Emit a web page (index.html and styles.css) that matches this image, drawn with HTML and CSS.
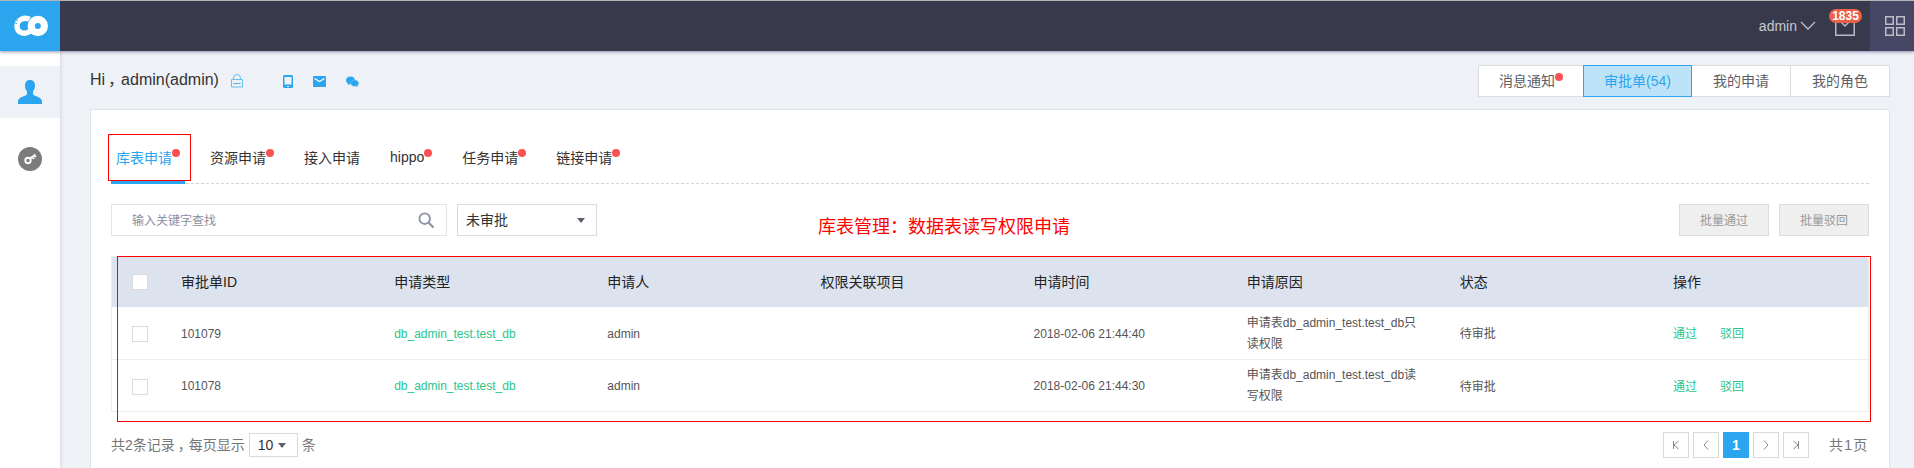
FILE: index.html
```html
<!DOCTYPE html>
<html lang="zh-CN">
<head>
<meta charset="utf-8">
<title>审批单</title>
<link rel="stylesheet" href="styles.css">
</head>
<body>
<header class="topbar">
  <div class="logo">
    <svg width="36" height="22" viewBox="0 0 36 22"><path d="M16.500 4.300C12 1.500 4 4.500 4 11c0 7 8 9.500 13 5" fill="none" stroke="#fff" stroke-width="5.400"/><circle cx="24.800" cy="11" r="6.600" fill="none" stroke="#fff" stroke-width="7.200"/><path d="M0 7l4 1.500M1.500 3.500l3.500 2.500" stroke="#2ba5ee" stroke-width="1"/></svg>
  </div>
  <div class="user">admin<svg width="16" height="10" viewBox="0 0 16 10"><path d="M1 1l7 7 7-7" fill="none" stroke="#c0c1c9" stroke-width="1.300"/></svg></div>
  <div class="mail">
    <svg width="20" height="20" viewBox="0 0 20 20"><path d="M.75 1h18.500v17.250H.75zM3 2l7 7 7-7" fill="none" stroke="#b9bac3" stroke-width="1.500"/></svg>
    <span class="badge">1835</span>
  </div>
  <div class="apps"><svg width="20" height="20" viewBox="0 0 20 20"><path d="M.75.750h7.500v7.500h-7.500zM11.750.750h7.500v7.500h-7.500zM.75 11.750h7.500v7.500h-7.500zM11.750 11.750h7.500v7.500h-7.500z" fill="none" stroke="#bdbdc8" stroke-width="1.500"/></svg></div>
</header>
<div class="layout">
  <nav class="side">
    <a class="side-item active"><svg width="24" height="24" viewBox="0 0 24 24"><path d="M12 0c3.300 0 5 2.200 5 5.500 0 2.500-.8 4.700-2 6v2c0 1 .5 1.700 2 2.200 4.500 1.500 7 2.800 7 6.300v2H0v-2c0-3.500 2.500-4.800 7-6.300 1.500-.5 2-1.200 2-2.200v-2c-1.200-1.300-2-3.500-2-6C7 2.200 8.700 0 12 0z" fill="#2ba5ee"/></svg></a>
    <a class="side-item key"><svg width="24" height="24" viewBox="0 0 24 24"><circle cx="12" cy="12" r="12" fill="#7c7c7c"/><circle cx="10" cy="13.500" r="2.700" fill="none" stroke="#fff" stroke-width="1.900"/><path d="M12 11.500l5.500-4M14.500 10l1.500 2M16.500 8.500l1.300 1.700" stroke="#fff" stroke-width="1.800"/></svg></a>
  </nav>
  <main class="main">
    <div class="greet">
      <span class="hi">Hi<span class="comma">，</span>admin(admin)</span>
      <svg class="i-lock" width="12" height="14" viewBox="0 0 12 14"><path d="M.5 5.500h11v7.500H.5zM2.500 5.500V4a3.500 3.500 0 0 1 7 0v1.500" fill="none" stroke="#6bbdf0"/><path d="M2.500 9.500h7" stroke="#2ba5ee" stroke-dasharray="2 .5"/></svg>
      <svg class="i-phone" width="10" height="13" viewBox="0 0 10 13"><path d="M1.500 0h7A1.500 1.500 0 0 1 10 1.500v10A1.500 1.500 0 0 1 8.500 13h-7A1.500 1.500 0 0 1 0 11.500v-10A1.500 1.500 0 0 1 1.500 0zM1.500 2v7.500h7V2zM4 11v1h2v-1z" fill="#2ba5ee" fill-rule="evenodd"/></svg>
      <svg class="i-mail" width="13" height="11" viewBox="0 0 13 11"><rect width="13" height="11" rx="1" fill="#2ba5ee"/><path d="M1.500 2.500l5 3 5-3" fill="none" stroke="#fff" stroke-width="1.200"/></svg>
      <svg class="i-chat" width="13" height="11" viewBox="0 0 13 11"><path d="M4.500 .5C7 .5 9 2 9 4.200S7 8 4.500 8L1.500 9 2 7.300C.8 6.700 0 5.800 0 4.200 0 2 2 .5 4.500 .5z" fill="#2ba5ee"/><path d="M8.700 4c2.300 0 4 1.300 4 3.200 0 1-.6 1.800-1.400 2.400l.4 1.300-1.600-.7c-2.900.7-5.400-.8-5.400-3C4.700 5.300 6.400 4 8.700 4z" fill="#2ba5ee" stroke="#a5d6f5" stroke-width=".4"/></svg>
      <div class="switch">
        <a class="wide">消息通知<i class="dot"></i></a><a class="on">审批单(54)</a><a>我的申请</a><a>我的角色</a>
      </div>
    </div>
    <section class="card">
      <div class="tabs">
        <a class="on">库表申请<i class="dot"></i></a><a>资源申请<i class="dot"></i></a><a>接入申请</a><a>hippo<i class="dot"></i></a><a>任务申请<i class="dot"></i></a><a>链接申请<i class="dot"></i></a>
      </div>
      <div class="tools">
        <div class="search"><span>输入关键字查找</span><svg width="17" height="17" viewBox="0 0 17 17"><circle cx="6.700" cy="6.700" r="5.300" fill="none" stroke="#8e93a8" stroke-width="1.900"/><path d="M10.500 10.500l5 5" stroke="#8e93a8" stroke-width="2.200"/></svg></div>
        <div class="select"><span>未审批</span><i class="caret"></i></div>
        <button class="btn first">批量通过</button><button class="btn">批量驳回</button>
      </div>
      <div class="table">
        <div class="row head"><span><i class="check"></i></span><span>审批单ID</span><span>申请类型</span><span>申请人</span><span>权限关联项目</span><span>申请时间</span><span>申请原因</span><span>状态</span><span>操作</span></div>
        <div class="row first"><span><i class="check"></i></span><span>101079</span><span class="green">db_admin_test.test_db</span><span>admin</span><span></span><span>2018-02-06 21:44:40</span><span class="reason">申请表db_admin_test.test_db只<br>读权限</span><span class="cn">待审批</span><span class="green ops cn"><a>通过</a><a>驳回</a></span></div>
        <div class="row"><span><i class="check"></i></span><span>101078</span><span class="green">db_admin_test.test_db</span><span>admin</span><span></span><span>2018-02-06 21:44:30</span><span class="reason">申请表db_admin_test.test_db读<br>写权限</span><span class="cn">待审批</span><span class="green ops cn"><a>通过</a><a>驳回</a></span></div>
      </div>
      <div class="footer">
        <span class="total">共2条记录<span class="comma">，</span>每页显示</span><div class="size">10<i class="caret"></i></div><span class="total">条</span>
        <div class="pager">
          <a><svg width="8" height="10" viewBox="0 0 8 10"><path d="M1.500 1v8M6.500 1L2 5l4.500 4"/></svg></a>
          <a><svg width="8" height="10" viewBox="0 0 8 10"><path d="M6 .5L2 5l4 4.500"/></svg></a>
          <a class="on">1</a>
          <a><svg width="8" height="10" viewBox="0 0 8 10"><path d="M2 .5L6 5 2 9.500"/></svg></a>
          <a><svg width="8" height="10" viewBox="0 0 8 10"><path d="M6.500 1v8M1.500 1L6 5 1.500 9"/></svg></a>
        </div>
        <span class="pages">共1页</span>
      </div>
    </section>
  </main>
</div>
<div class="mark mark-tab"></div>
<div class="mark mark-table"></div>
<div class="note">库表管理：数据表读写权限申请</div>
</body>
</html>
```
FILE: styles.css
```css
* { box-sizing: border-box; }
body {
  margin: 0;
  height: 468px;
  overflow: hidden;
  position: relative;
  background: #eef1f6;
  font-family: "Liberation Sans", "Noto Sans CJK SC", sans-serif;
  font-size: 14px;
  color: #333;
}
svg { display: block; flex: none; }
i { font-style: normal; }

.topbar {
  position: relative;
  z-index: 1;
  display: flex;
  align-items: center;
  height: 51px;
  border-top: 1px solid #b4b4b4;
  background: #383a4c;
  box-shadow: 0 1px 3px rgba(70, 70, 130, .6);
}
.logo { width: 60px; height: 50px; background: #2ba5ee; padding: 14px 0 0 13px; }
.user { display: flex; align-items: center; gap: 3px; margin-left: auto; color: #c8c9cf; }
.mail { position: relative; margin: 0 15px 0 19px; padding-top: 1px; }
.badge {
  position: absolute;
  left: -6px;
  top: -7px;
  width: 33px;
  height: 14px;
  border-radius: 7px;
  background: #ea6048;
  color: #fff;
  font-size: 12px;
  font-weight: bold;
  line-height: 14px;
  text-align: center;
}
.apps { width: 44px; height: 50px; padding: 15px 0 0 15px; background: #464764; }

.layout { display: flex; height: 417px; }
.side { width: 60px; padding-top: 15px; background: #fff; box-shadow: 1px 0 3px rgba(60, 70, 110, .15); }
.side-item { display: flex; justify-content: center; align-items: center; height: 52px; }
.side-item.active { background: #eef1f6; }
.side-item.key { margin-top: 15px; }
.main { flex: 1; padding: 14px 24px 0 30px; }

.greet { display: flex; align-items: center; height: 32px; }
.hi { width: 141px; padding-bottom: 3px; font-size: 16px; line-height: 24px; white-space: nowrap; }
.comma { display: inline-block; width: 1em; text-indent: 3px; }
.i-phone { margin-left: 40px; }
.i-mail { margin-left: 20px; }
.i-chat { margin-left: 20px; }
.switch { display: flex; margin-left: auto; height: 32px; }
.switch a {
  display: flex;
  align-items: center;
  width: 99px;
  padding: 0 0 2px 21px;
  border: 1px solid #dcdcde;
  border-left: 0;
  background: #fff;
  color: #5e5e66;
}
.switch a.wide { width: 105px; padding-left: 20px; border-left: 1px solid #dcdcde; border-right: 0; }
.switch a.on { width: 109px; padding-left: 20px; border: 1px solid #2ba5ee; background: #bde3f9; color: #2ba5ee; }
.dot { width: 8px; height: 8px; border-radius: 50%; background: #fa5252; margin-bottom: 7px; }

.card { height: 380px; margin-top: 12px; padding: 24px 20px 0; background: #fff; border: 1px solid #dfe3ec; }
.tabs { display: flex; gap: 20px; height: 50px; border-bottom: 1px dashed #d5d5d5; }
.tabs a { display: flex; align-items: center; padding: 0 5px 5px; height: 50px; }
.tabs a.on { color: #2ba5ee; border-bottom: 3px solid #2ba5ee; padding-bottom: 2px; }

.tools { display: flex; margin-top: 20px; height: 32px; }
.search { display: flex; align-items: center; justify-content: space-between; width: 336px; border: 1px solid #e2e4e8; padding: 0 11px 0 20px; color: #8b8fa3; font-size: 12px; }
.search span, .select span { padding-bottom: 2px; }
.select { display: flex; align-items: center; justify-content: space-between; width: 140px; margin-left: 10px; border: 1px solid #dadada; padding: 0 11px 0 8px; }
.caret { border: 4px solid transparent; border-top: 5px solid #5f5f6b; border-bottom: 0; }
.btn { width: 90px; margin-left: 10px; padding: 0 0 2px; border: 1px solid #ddd; background: #efefef; color: #999; font: inherit; font-size: 12px; }
.btn.first { margin-left: auto; }

.table { margin-top: 20px; border: 1px solid #eee; }
.row { display: grid; grid-template-columns: 69px repeat(8, 213.150px); align-items: center; width: 1756px; height: 53px; border-bottom: 1px solid #eee; font-size: 12px; color: #555; white-space: nowrap; overflow: hidden; }
.row:last-child { height: 51px; border-bottom: 0; }
.head { height: 50px; border: 0; background: #dce3ef; font-size: 14px; color: #222; }
.head span + span { padding-bottom: 2px; }
.check { display: block; width: 16px; height: 16px; margin-left: 20px; background: #fff; border: 1px solid #dcdcdc; }
.first > span { padding-top: 2px; }
.row:last-child .check { margin-top: 2px; }
.green { color: #2bc48a; }
.reason { line-height: 21px; }
.row .cn { padding: 0 0 1px; }
.ops { display: flex; gap: 23px; }

.footer { display: flex; align-items: center; height: 26px; margin-top: 20px; color: #777; }
.total, .pages { padding-bottom: 3px; }
.size { display: flex; align-items: center; justify-content: space-between; width: 49px; height: 24px; margin: 0 4px; padding: 0 11px 0 8px; border: 1px solid #dadada; color: #333; }
.pager { display: flex; gap: 4px; margin-left: auto; }
.pager a { display: flex; align-items: center; justify-content: center; width: 26px; height: 26px; border: 1px solid #dadada; }
.pager a.on { border: 0; background: #2ba5ee; color: #fff; font-weight: bold; }
.pager path { fill: none; stroke: #888; }
.pages { width: 40px; margin-left: 20px; letter-spacing: 1.200px; white-space: nowrap; }

.mark { position: absolute; z-index: 2; border: 1px solid #f00; }
.mark-tab { left: 108px; top: 134px; width: 83px; height: 47px; }
.mark-table { left: 117px; top: 256px; width: 1754px; height: 166px; }
.note { position: absolute; left: 818px; top: 214px; font-size: 18px; line-height: 27px; color: #f00; }
```
